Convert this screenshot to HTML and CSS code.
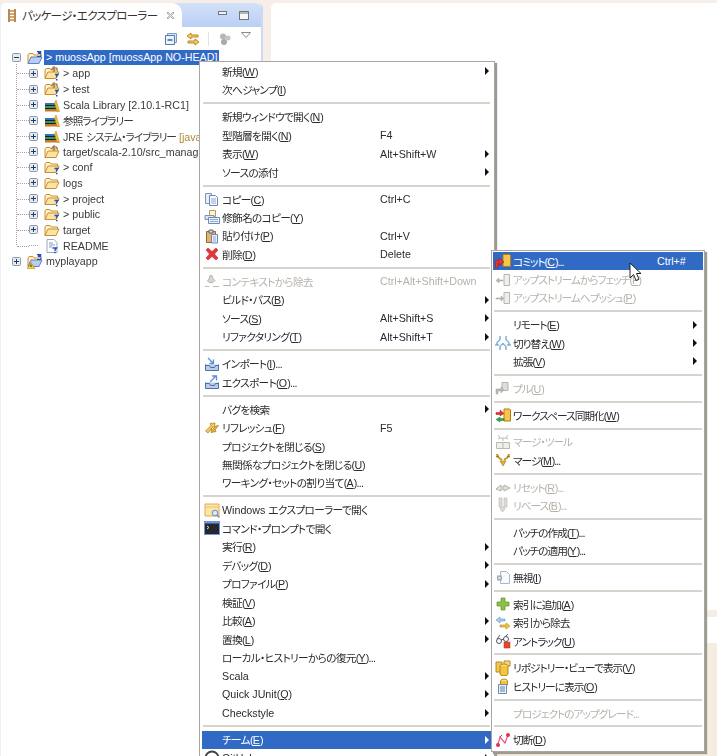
FILE: index.html
```html
<!DOCTYPE html>
<html lang="ja">
<head>
<meta charset="utf-8">
<title>パッケージ・エクスプローラー</title>
<link rel="stylesheet" href="styles.css">
</head>
<body>
<svg class="defs" width="0" height="0">
  <defs>
    <symbol id="plus" viewBox="0 0 9 9"><rect x=".5" y=".5" width="8" height="8" rx="1" fill="#e6e9ee" stroke="#8c97a6"/><path d="M2 4.500h5M4.500 2v5" stroke="#1c3a6e"/></symbol>
    <symbol id="minus" viewBox="0 0 9 9"><rect x=".5" y=".5" width="8" height="8" rx="1" fill="#e6e9ee" stroke="#8c97a6"/><path d="M2 4.500h5" stroke="#1c3a6e"/></symbol>
    <symbol id="folder" viewBox="0 0 16 16"><path d="M1 13.500V5l1-1.500h4L7 5h6.500v2" fill="#fff3c8" stroke="#c98f35"/><path d="M1 13.500 4 7h11l-3 6.500z" fill="#fbe3a0" stroke="#c98f35"/></symbol>
    <symbol id="pkgfolder" viewBox="0 0 16 16"><use href="#folder"/><path d="M10 1v6M8 3h5M8 3v2M13 3v2" stroke="#8a5a22" fill="none"/><path d="M11 9.500h3l-1.500 1.800v1.200" stroke="#2350b4" stroke-width="1.300" fill="none"/><path d="M12 14h1.500v1.500H12z" fill="#2350b4"/></symbol>
    <symbol id="qfolder" viewBox="0 0 16 16"><use href="#folder"/><path d="M10.500 9.500h3.500l-1.500 2v1" stroke="#2350b4" stroke-width="1.300" fill="none"/><path d="M12 13.700h1.500v1.500H12z" fill="#2350b4"/></symbol>
    <symbol id="srcfolder" viewBox="0 0 16 16"><use href="#folder"/><path d="M10 1v6M8 3h5M8 3v2M13 3v2" stroke="#8a5a22" fill="none"/></symbol>
    <symbol id="project" viewBox="0 0 16 16"><path d="M1 13.500V5l1-1.500h4L7 5h6.500v2" fill="#fff3c8" stroke="#c98f35"/><path d="M1 13.500 4 7h11l-3 6.500z" fill="#b9cdf0" stroke="#5f83c4"/><path d="M10 1.500h4v1h-3v1h3v3h-4" stroke="#2350b4" fill="none"/></symbol>
    <symbol id="warnproject" viewBox="0 0 16 16"><use href="#project"/><path d="M4 9.500 8 16H0z" fill="#fbd23a" stroke="#a97a12" stroke-width=".6"/><path d="M4 11.500v2.500" stroke="#222"/></symbol>
    <symbol id="lib" viewBox="0 0 16 16"><path d="M1 6h11v2.500H1z" fill="#3d6fb5"/><path d="M1 9h12v2.500H1z" fill="#3a9a4f"/><path d="M1 12h13v2.500H1z" fill="#c47a22"/><path d="M1 8.500h11M1 11.500h12" stroke="#123"/><path d="M12 3 15.500 14.500H13L10.500 6z" fill="#f2c230" stroke="#a37a12" stroke-width=".5"/></symbol>
    <symbol id="readme" viewBox="0 0 16 16"><path d="M3 1.500h7l3 3v10H3z" fill="#fff" stroke="#98a8c0"/><path d="M5 5h4M5 7h6M5 9h3" stroke="#7f9bc8"/><path d="M8.500 10h4l-1.500 2v1" stroke="#2350b4" stroke-width="1.300" fill="none"/><path d="M10.300 13.700h1.500v1.500h-1.500z" fill="#2350b4"/></symbol>
    <symbol id="copy" viewBox="0 0 16 16"><path d="M1.500 2.500h6v10h-6z" fill="#e6eefa" stroke="#7d94b8"/><path d="M5.500 4.500h6l2 2v8h-8z" fill="#f6f9ff" stroke="#6e88b0"/><path d="M7 8h5M7 10h5M7 12h5" stroke="#8ea8d4"/></symbol>
    <symbol id="qcopy" viewBox="0 0 16 16"><path d="M5.500 1.500h6v6h-6z" fill="#fff3d0" stroke="#b99a55"/><path d="M1 6.500h9v4H1z" fill="#d9e4f6" stroke="#7d94b8"/><path d="M4.500 8.500h11v6h-11z" fill="#eef3fb" stroke="#6e88b0"/><path d="M6 10.500h8M6 12.500h8" stroke="#8ea8d4"/></symbol>
    <symbol id="paste" viewBox="0 0 16 16"><path d="M2.500 3.500h9v11h-9z" fill="#e2b56a" stroke="#8f6a30"/><path d="M5 2h4v3H5z" fill="#cfd6e0" stroke="#5c6678"/><path d="M7.500 6.500h6v8.500h-6z" fill="#eaf0fa" stroke="#6e88b0"/><path d="M9 9h3M9 11h3M9 13h3" stroke="#8ea8d4"/></symbol>
    <symbol id="delete" viewBox="0 0 16 16"><path d="M2 4 4 2l4 3.500L12 2l2 2-3.500 4 3.500 4-2 2-4-3.500L4 14l-2-2 3.500-4z" fill="#e3363a" stroke="#c8272c" stroke-width=".6"/></symbol>
    <symbol id="ctxremove" viewBox="0 0 16 16"><path d="M6 2.500h2l1 3 2 2-2 2H5L3.500 8 5 6z" fill="#d8d5d0" stroke="#b9b5ae"/><path d="M1 13.500h4M9 13.500h6" stroke="#bdb9b2"/></symbol>
    <symbol id="import" viewBox="0 0 16 16"><path d="M1.500 8.500v6h13v-6" fill="#b9cdea" stroke="#4b6fa8"/><path d="M1.500 9.500h4l1 2h4l1-2h3" fill="none" stroke="#4b6fa8"/><path d="M4 2l5 5M9.500 3.500v4h-4" fill="none" stroke="#5a8fd8" stroke-width="1.300"/></symbol>
    <symbol id="export" viewBox="0 0 16 16"><path d="M1.500 8.500v6h13v-6" fill="#b9cdea" stroke="#4b6fa8"/><path d="M1.500 9.500h4l1 2h4l1-2h3" fill="none" stroke="#4b6fa8"/><path d="M6 8l6-6M8 2h4.500v4.500" fill="none" stroke="#5a8fd8" stroke-width="1.300"/></symbol>
    <symbol id="refresh" viewBox="0 0 16 16"><path d="M1.500 11 7 5.500 6 3.500l5-.5-.5 5-1.500-1.500L4 13z" fill="#f2c65a" stroke="#b07d1d" stroke-width=".7"/><path d="M14.500 5.500 11 10l1 1.500-5 1 .5-4 1 1L12 6z" fill="#edb33e" stroke="#a7721a" stroke-width=".7"/></symbol>
    <symbol id="explorer" viewBox="0 0 16 16"><path d="M1 2h14v12H1z" fill="#fbe6a8" stroke="#e4a94a"/><path d="M1 5h14" stroke="#eec372"/><circle cx="11" cy="11" r="2.800" fill="#d9e8fb" stroke="#6d8fc0"/><path d="M13 13l2.500 2.500" stroke="#6d8fc0" stroke-width="1.400"/></symbol>
    <symbol id="cmd" viewBox="0 0 16 16"><path d="M0 1h16v14H0z" fill="#6f97d8"/><path d="M1 3.500h14V14H1z" fill="#26262c"/><path d="M3 6l2 1.500L3 9" stroke="#ddd" fill="none"/></symbol>
    <symbol id="commit" viewBox="0 0 16 16"><path d="M8 1.500h6.500l1 1v11H8z" fill="#f6c64a" stroke="#b27c16"/><path d="M.5 15V7.500h3.500V5l5 4-5 3.500V10H3v5z" fill="#e5342f" stroke="#a91b1b" stroke-width=".6"/></symbol>
    <symbol id="fetch" viewBox="0 0 16 16"><path d="M9 2.500h5.500v11H9z" fill="#eee" stroke="#b8b4ae"/><path d="M8 8H4V6L1 8.500 4 11V9h4z" fill="#bcb8b2" stroke="#a5a19b" stroke-width=".5"/></symbol>
    <symbol id="push" viewBox="0 0 16 16"><path d="M9 2.500h5.500v11H9z" fill="#eee" stroke="#b8b4ae"/><path d="M1 8h5V6l3 2.500L6 11V9H1z" fill="#bcb8b2" stroke="#a5a19b" stroke-width=".5"/></symbol>
    <symbol id="switch" viewBox="0 0 16 16"><path d="M5 1v3c0 2-3 2-3 4v2M11 1v3c0 2 3 2 3 4v2M5 15v-3c0-2 3-2 3-4M11 15v-3c0-2-3-2-3-4" fill="none" stroke="#7fb0d8" stroke-width="1.500"/><path d="M0 10h4M12 10h4" stroke="#5b93c4"/></symbol>
    <symbol id="pull" viewBox="0 0 16 16"><path d="M7 2.500h6v8H7z" fill="#ddd" stroke="#b8b4ae"/><path d="M1 9h5v-2l3 3-3 3v-2H3v3H1z" fill="#bcb8b2" stroke="#a5a19b" stroke-width=".5"/></symbol>
    <symbol id="sync" viewBox="0 0 16 16"><path d="M9 2h5.500l1 1v11H9z" fill="#f6c64a" stroke="#b27c16"/><path d="M1 5.500h4V3l4 3.500L5 9V7.500H1z" fill="#e5342f" stroke="#a91b1b" stroke-width=".5"/><path d="M9 11.500H5V10L1 12.500 5 15v-1.500h4z" fill="#3aa84a" stroke="#1e7a2e" stroke-width=".5"/></symbol>
    <symbol id="mergetool" viewBox="0 0 16 16"><path d="M1.500 8.500h13v6h-13zM8 8.500v6" fill="#f0eeea" stroke="#bcb8b2"/><path d="M3 1l2 3M3 5l2-1h6l2 1M13 1l-2 3M8 4v3" fill="none" stroke="#c0bcb5"/></symbol>
    <symbol id="merge" viewBox="0 0 16 16"><path d="M2 2c0 3 2 4 5 6M14 2c0 3-2 4-5 6" fill="none" stroke="#c99a2e" stroke-width="2"/><path d="M5 9h6l-3 5z" fill="#e0b23c" stroke="#a37a12" stroke-width=".6"/><path d="M1 5l3-1M15 5l-3-1" stroke="#8a6a18"/></symbol>
    <symbol id="reset" viewBox="0 0 16 16"><path d="M1 10l5-4v2h3V6l6 3-6 3v-2H6v2z" fill="#e4e2de" stroke="#b5b1aa"/></symbol>
    <symbol id="revert" viewBox="0 0 16 16"><path d="M4 1h3v9h2V1h3v9H9l1 2-2.500 3L5 12l1-2H4z" fill="#dedbd6" stroke="#bab6af" stroke-width=".6"/></symbol>
    <symbol id="ignore" viewBox="0 0 16 16"><path d="M5.500 2.500h6l3 3v9h-9z" fill="#f8fafe" stroke="#a9b8d0"/><path d="M2 6.500h5v5H2z" fill="#9aa0aa"/><path d="M3 7.500l3 3M6 7.500l-3 3" stroke="#fff"/></symbol>
    <symbol id="add" viewBox="0 0 16 16"><path d="M6 2h4v4h4v4h-4v4H6v-4H2V6h4z" fill="#8cc04a" stroke="#5d8f2a" stroke-width=".7"/></symbol>
    <symbol id="remove" viewBox="0 0 16 16"><path d="M1 5l4-3v2h5v2H5v2z" fill="#a8cdee" stroke="#6a95bf" stroke-width=".6"/><path d="M15 11l-4-3v2H5v2h6v2z" fill="#f0c040" stroke="#b38a1e" stroke-width=".6"/></symbol>
    <symbol id="untrack" viewBox="0 0 16 16"><circle cx="4" cy="8" r="2.500" fill="none" stroke="#556"/><circle cx="11" cy="6" r="2.500" fill="none" stroke="#556"/><path d="M6 7l3-1M2 6l3-4M10 4l3-3" stroke="#556"/><path d="M9 9h6v6H9z" fill="#e8452c" stroke="#b52d18" stroke-width=".5"/></symbol>
    <symbol id="repo" viewBox="0 0 16 16"><path d="M1 2h6v10H1z" fill="#f2c850" stroke="#b58a1c"/><path d="M9 1h6v5H9z" fill="#f6d778" stroke="#b58a1c"/><ellipse cx="9" cy="6" rx="4" ry="2" fill="#f9e08a" stroke="#b58a1c"/><path d="M5 6v8a4 1.800 0 0 0 8 0V6" fill="#f2c440" stroke="#b58a1c"/></symbol>
    <symbol id="history" viewBox="0 0 16 16"><ellipse cx="9" cy="3" rx="3.500" ry="2" fill="#f9e08a" stroke="#b58a1c"/><path d="M5.500 3v4h7V3" fill="#f2c440" stroke="#b58a1c"/><path d="M3.500 6.500h8v9h-8z" fill="#eef3fb" stroke="#6e88b0"/><path d="M5 9h5M5 11h5M5 13h5" stroke="#5d7eb0"/></symbol>
    <symbol id="disconnect" viewBox="0 0 16 16"><path d="M3 12 5 5l5 6 3-8" fill="none" stroke="#e8577f" stroke-width="1.200"/><circle cx="3" cy="13" r="2" fill="#e0324a"/><circle cx="13" cy="3" r="2" fill="#e0324a"/><path d="M7 3l-2 2" stroke="#c33"/></symbol>
    <symbol id="github" viewBox="0 0 16 16"><circle cx="8" cy="8" r="6.500" fill="#fff" stroke="#444" stroke-width="2"/></symbol>
  </defs>
</svg>

<div class="app">
  <section class="pane">
    <header class="tabbar">
      <div class="tab">
        <svg class="tabicon" width="8" height="13" viewBox="0 0 8 13"><path d="M1 0v13M7 0v13" stroke="#8a5a22" stroke-width="1.400"/><path d="M1 2h6M1 5h6M1 8h6M1 11h6" stroke="#c48a3c" stroke-width="1.400"/></svg>
        <span class="tabtitle">パッケージ・エクスプローラー</span>
        <svg class="tabclose" width="9" height="9" viewBox="0 0 9 9"><path d="M1 2 2 1l2.500 2.500L7 1l1 1-2.500 2.500L8 7 7 8 4.500 5.500 2 8 1 7l2.500-2.500z" fill="#e8e8e8" stroke="#8f8f8f" stroke-width=".7"/></svg>
      </div>
      <div class="winbtns">
        <svg width="9" height="4" viewBox="0 0 9 4"><rect x=".5" y=".5" width="8" height="3" fill="#f3f3f3" stroke="#6f7680"/></svg>
        <svg width="10" height="9" viewBox="0 0 10 9"><rect x=".5" y=".5" width="9" height="8" fill="#f6f7f8" stroke="#6f7680"/><path d="M1 2h8" stroke="#6f7680"/></svg>
      </div>
    </header>
    <div class="toolbar">
      <svg class="tool-a" width="12" height="12" viewBox="0 0 12 12"><path d="M2.500.5h9v9h-9z" fill="#d8e4f6" stroke="#7a9cc8"/><path d="M.5 2.500h9v9h-9z" fill="#eef4fc" stroke="#4d79b4"/><path d="M2.500 7h5" stroke="#2c5590" stroke-width="1.400"/></svg>
      <svg class="tool-b" width="14" height="14" viewBox="0 0 14 14"><path d="M5 1 1 4l4 3V5h7V3H5z" fill="#f6d36a" stroke="#c1851c"/><path d="M9 7l4 3-4 3v-2H2V9h7z" fill="#f6d36a" stroke="#c1851c"/></svg>
      <i class="tool-sep"></i>
      <svg class="tool-c" width="12" height="12" viewBox="0 0 12 12"><circle cx="4" cy="3.500" r="3" fill="#b6b6b6"/><circle cx="9" cy="5" r="2.500" fill="#c4c4c4"/><circle cx="5" cy="9" r="3" fill="#a9a9a9"/></svg>
      <svg class="tool-d" width="10" height="6" viewBox="0 0 10 6"><path d="M.5.500h9L5 5.500z" fill="#fff" stroke="#8b8b8b"/></svg>
    </div>
    <div class="tree">
      <div class="row top">
        <svg class="exp" width="9" height="9"><use href="#minus"/></svg>
        <svg class="ico" width="16" height="16"><use href="#project"/></svg>
        <span class="lbl selected"><span class="chev">&gt;</span>muossApp [muossApp NO-HEAD]</span>
      </div>
      <div class="kids">
        <div class="row kid"><svg class="exp" width="9" height="9"><use href="#plus"/></svg><svg class="ico" width="16" height="16"><use href="#pkgfolder"/></svg><span class="lbl"><span class="chev">&gt;</span>app</span></div>
        <div class="row kid"><svg class="exp" width="9" height="9"><use href="#plus"/></svg><svg class="ico" width="16" height="16"><use href="#pkgfolder"/></svg><span class="lbl"><span class="chev">&gt;</span>test</span></div>
        <div class="row kid"><svg class="exp" width="9" height="9"><use href="#plus"/></svg><svg class="ico" width="16" height="16"><use href="#lib"/></svg><span class="lbl">Scala Library [2.10.1-RC1]</span></div>
        <div class="row kid"><svg class="exp" width="9" height="9"><use href="#plus"/></svg><svg class="ico" width="16" height="16"><use href="#lib"/></svg><span class="lbl ja">参照ライブラリー</span></div>
        <div class="row kid"><svg class="exp" width="9" height="9"><use href="#plus"/></svg><svg class="ico" width="16" height="16"><use href="#lib"/></svg><span class="lbl">JRE <span class="ja">システム・ライブラリー</span> <span class="deco">[javaSE-1.7]</span></span></div>
        <div class="row kid"><svg class="exp" width="9" height="9"><use href="#plus"/></svg><svg class="ico" width="16" height="16"><use href="#srcfolder"/></svg><span class="lbl">target/scala-2.10/src_managed</span></div>
        <div class="row kid"><svg class="exp" width="9" height="9"><use href="#plus"/></svg><svg class="ico" width="16" height="16"><use href="#qfolder"/></svg><span class="lbl"><span class="chev">&gt;</span>conf</span></div>
        <div class="row kid"><svg class="exp" width="9" height="9"><use href="#plus"/></svg><svg class="ico" width="16" height="16"><use href="#folder"/></svg><span class="lbl">logs</span></div>
        <div class="row kid"><svg class="exp" width="9" height="9"><use href="#plus"/></svg><svg class="ico" width="16" height="16"><use href="#qfolder"/></svg><span class="lbl"><span class="chev">&gt;</span>project</span></div>
        <div class="row kid"><svg class="exp" width="9" height="9"><use href="#plus"/></svg><svg class="ico" width="16" height="16"><use href="#qfolder"/></svg><span class="lbl"><span class="chev">&gt;</span>public</span></div>
        <div class="row kid"><svg class="exp" width="9" height="9"><use href="#plus"/></svg><svg class="ico" width="16" height="16"><use href="#folder"/></svg><span class="lbl">target</span></div>
        <div class="row kid leaf"><span class="exp"></span><svg class="ico" width="16" height="16"><use href="#readme"/></svg><span class="lbl">README</span></div>
      </div>
      <div class="row top">
        <svg class="exp" width="9" height="9"><use href="#plus"/></svg>
        <svg class="ico" width="16" height="16"><use href="#warnproject"/></svg>
        <span class="lbl">myplayapp</span>
      </div>
    </div>
  </section>
  <div class="gutter"></div>
  <main class="editor">
    <div class="ed-main"></div>
    <div class="ed-band"></div>
    <div class="ed-white"></div>
    <div class="ed-bottom"></div>
  </main>
</div>

<nav class="menu main-menu">
  <div class="mi"><span class="mic"></span><span class="t">新規(<u>W</u>)</span><span></span><b class="arr"></b></div>
  <div class="mi"><span class="mic"></span><span class="t">次へジャンプ(<u>I</u>)</span><span></span><span></span></div>
  <hr class="sep">
  <div class="mi"><span class="mic"></span><span class="t">新規ウィンドウで開く(<u>N</u>)</span><span></span><span></span></div>
  <div class="mi"><span class="mic"></span><span class="t">型階層を開く(<u>N</u>)</span><span>F4</span><span></span></div>
  <div class="mi"><span class="mic"></span><span class="t">表示(<u>W</u>)</span><span>Alt+Shift+W</span><b class="arr"></b></div>
  <div class="mi"><span class="mic"></span><span class="t">ソースの添付</span><span></span><b class="arr"></b></div>
  <hr class="sep">
  <div class="mi"><svg class="mic" width="16" height="16"><use href="#copy"/></svg><span class="t">コピー(<u>C</u>)</span><span>Ctrl+C</span><span></span></div>
  <div class="mi"><svg class="mic" width="16" height="16"><use href="#qcopy"/></svg><span class="t">修飾名のコピー(<u>Y</u>)</span><span></span><span></span></div>
  <div class="mi"><svg class="mic" width="16" height="16"><use href="#paste"/></svg><span class="t">貼り付け(<u>P</u>)</span><span>Ctrl+V</span><span></span></div>
  <div class="mi"><svg class="mic" width="16" height="16"><use href="#delete"/></svg><span class="t">削除(<u>D</u>)</span><span>Delete</span><span></span></div>
  <hr class="sep">
  <div class="mi off"><svg class="mic" width="16" height="16"><use href="#ctxremove"/></svg><span class="t">コンテキストから除去</span><span>Ctrl+Alt+Shift+Down</span><span></span></div>
  <div class="mi"><span class="mic"></span><span class="t">ビルド・パス(<u>B</u>)</span><span></span><b class="arr"></b></div>
  <div class="mi"><span class="mic"></span><span class="t">ソース(<u>S</u>)</span><span>Alt+Shift+S</span><b class="arr"></b></div>
  <div class="mi"><span class="mic"></span><span class="t">リファクタリング(<u>T</u>)</span><span>Alt+Shift+T</span><b class="arr"></b></div>
  <hr class="sep">
  <div class="mi"><svg class="mic" width="16" height="16"><use href="#import"/></svg><span class="t">インポート(<u>I</u>)...</span><span></span><span></span></div>
  <div class="mi"><svg class="mic" width="16" height="16"><use href="#export"/></svg><span class="t">エクスポート(<u>O</u>)...</span><span></span><span></span></div>
  <hr class="sep">
  <div class="mi"><span class="mic"></span><span class="t">バグを検索</span><span></span><b class="arr"></b></div>
  <div class="mi"><svg class="mic" width="16" height="16"><use href="#refresh"/></svg><span class="t">リフレッシュ(<u>F</u>)</span><span>F5</span><span></span></div>
  <div class="mi"><span class="mic"></span><span class="t">プロジェクトを閉じる(<u>S</u>)</span><span></span><span></span></div>
  <div class="mi"><span class="mic"></span><span class="t">無関係なプロジェクトを閉じる(<u>U</u>)</span><span></span><span></span></div>
  <div class="mi"><span class="mic"></span><span class="t">ワーキング・セットの割り当て(<u>A</u>)...</span><span></span><span></span></div>
  <hr class="sep">
  <div class="mi"><svg class="mic" width="16" height="16"><use href="#explorer"/></svg><span class="t"><span class="lat">Windows </span>エクスプローラーで開く</span><span></span><span></span></div>
  <div class="mi"><svg class="mic" width="16" height="16"><use href="#cmd"/></svg><span class="t">コマンド・プロンプトで開く</span><span></span><span></span></div>
  <div class="mi"><span class="mic"></span><span class="t">実行(<u>R</u>)</span><span></span><b class="arr"></b></div>
  <div class="mi"><span class="mic"></span><span class="t">デバッグ(<u>D</u>)</span><span></span><b class="arr"></b></div>
  <div class="mi"><span class="mic"></span><span class="t">プロファイル(<u>P</u>)</span><span></span><b class="arr"></b></div>
  <div class="mi"><span class="mic"></span><span class="t">検証(<u>V</u>)</span><span></span><span></span></div>
  <div class="mi"><span class="mic"></span><span class="t">比較(<u>A</u>)</span><span></span><b class="arr"></b></div>
  <div class="mi"><span class="mic"></span><span class="t">置換(<u>L</u>)</span><span></span><b class="arr"></b></div>
  <div class="mi"><span class="mic"></span><span class="t">ローカル・ヒストリーからの復元(<u>Y</u>)...</span><span></span><span></span></div>
  <div class="mi"><span class="mic"></span><span>Scala</span><span></span><b class="arr"></b></div>
  <div class="mi"><span class="mic"></span><span>Quick JUnit(<u>Q</u>)</span><span></span><b class="arr"></b></div>
  <div class="mi"><span class="mic"></span><span>Checkstyle</span><span></span><b class="arr"></b></div>
  <hr class="sep">
  <div class="mi on"><span class="mic"></span><span class="t">チーム(<u>E</u>)</span><span></span><b class="arr"></b></div>
  <div class="mi"><svg class="mic" width="16" height="16"><use href="#github"/></svg><span>GitHub</span><span></span><b class="arr"></b></div>
</nav>

<nav class="menu sub-menu">
  <div class="mi on"><svg class="mic" width="16" height="16"><use href="#commit"/></svg><span class="t">コミット(<u>C</u>)...</span><span>Ctrl+#</span><span></span></div>
  <div class="mi off"><svg class="mic" width="16" height="16"><use href="#fetch"/></svg><span class="t">アップストリームからフェッチ(<u>F</u>)</span><span></span><span></span></div>
  <div class="mi off"><svg class="mic" width="16" height="16"><use href="#push"/></svg><span class="t">アップストリームへプッシュ(<u>P</u>)</span><span></span><span></span></div>
  <hr class="sep">
  <div class="mi"><span class="mic"></span><span class="t">リモート(<u>E</u>)</span><span></span><b class="arr"></b></div>
  <div class="mi"><svg class="mic" width="16" height="16"><use href="#switch"/></svg><span class="t">切り替え(<u>W</u>)</span><span></span><b class="arr"></b></div>
  <div class="mi"><span class="mic"></span><span class="t">拡張(<u>V</u>)</span><span></span><b class="arr"></b></div>
  <hr class="sep">
  <div class="mi off"><svg class="mic" width="16" height="16"><use href="#pull"/></svg><span class="t">プル(<u>U</u>)</span><span></span><span></span></div>
  <hr class="sep">
  <div class="mi"><svg class="mic" width="16" height="16"><use href="#sync"/></svg><span class="t">ワークスペース同期化(<u>W</u>)</span><span></span><span></span></div>
  <hr class="sep">
  <div class="mi off"><svg class="mic" width="16" height="16"><use href="#mergetool"/></svg><span class="t">マージ・ツール</span><span></span><span></span></div>
  <div class="mi"><svg class="mic" width="16" height="16"><use href="#merge"/></svg><span class="t">マージ(<u>M</u>)...</span><span></span><span></span></div>
  <hr class="sep">
  <div class="mi off"><svg class="mic" width="16" height="16"><use href="#reset"/></svg><span class="t">リセット(<u>R</u>)...</span><span></span><span></span></div>
  <div class="mi off"><svg class="mic" width="16" height="16"><use href="#revert"/></svg><span class="t">リベース(<u>B</u>)...</span><span></span><span></span></div>
  <hr class="sep">
  <div class="mi"><span class="mic"></span><span class="t">パッチの作成(<u>T</u>)...</span><span></span><span></span></div>
  <div class="mi"><span class="mic"></span><span class="t">パッチの適用(<u>Y</u>)...</span><span></span><span></span></div>
  <hr class="sep">
  <div class="mi"><svg class="mic" width="16" height="16"><use href="#ignore"/></svg><span class="t">無視(<u>I</u>)</span><span></span><span></span></div>
  <hr class="sep">
  <div class="mi"><svg class="mic" width="16" height="16"><use href="#add"/></svg><span class="t">索引に追加(<u>A</u>)</span><span></span><span></span></div>
  <div class="mi"><svg class="mic" width="16" height="16"><use href="#remove"/></svg><span class="t">索引から除去</span><span></span><span></span></div>
  <div class="mi"><svg class="mic" width="16" height="16"><use href="#untrack"/></svg><span class="t">アントラック(<u>U</u>)</span><span></span><span></span></div>
  <hr class="sep">
  <div class="mi"><svg class="mic" width="16" height="16"><use href="#repo"/></svg><span class="t">リポジトリー・ビューで表示(<u>V</u>)</span><span></span><span></span></div>
  <div class="mi"><svg class="mic" width="16" height="16"><use href="#history"/></svg><span class="t">ヒストリーに表示(<u>O</u>)</span><span></span><span></span></div>
  <hr class="sep">
  <div class="mi off"><span class="mic"></span><span class="t">プロジェクトのアップグレード...</span><span></span><span></span></div>
  <hr class="sep">
  <div class="mi"><svg class="mic" width="16" height="16"><use href="#disconnect"/></svg><span class="t">切断(<u>D</u>)</span><span></span><span></span></div>
</nav>

<svg class="cursor" width="13" height="21" viewBox="0 0 13 21"><path d="M1 1v15l3.500-3.500 2.500 6 3-1.300-2.500-5.700H12z" fill="#fff" stroke="#222"/></svg>
</body>
</html>
```

FILE: styles.css
```css
* { box-sizing: border-box; }
html, body { margin: 0; padding: 0; }
body {
  position: relative;
  width: 717px;
  height: 756px;
  overflow: hidden;
  background: #f6efe9;
  font-family: "Liberation Sans", "Noto Sans CJK JP", sans-serif;
  font-size: 10.7px;
  font-feature-settings: "palt" 1;
  color: #2b2b2b;
}
.defs { position: absolute; }

.app, .menu, .cursor { filter: blur(.3px); }
.app { display: flex; height: 756px; padding-top: 3px; }

/* left view */
.pane {
  width: 263px;
  flex: none;
  display: flex;
  flex-direction: column;
  background: #fff;
  border-left: 1px solid #eef1fb;
  border-right: 2px solid #cdd9f0;
  border-radius: 6px 6px 0 0;
}
.tabbar {
  height: 24px;
  display: flex;
  justify-content: space-between;
  background: linear-gradient(#d3e1f8, #b9cff5);
  border-radius: 6px 6px 0 0;
}
.tab {
  width: 181px;
  display: flex;
  align-items: center;
  padding-left: 7px;
  background: #fff;
  border-radius: 5px 10px 0 0;
}
.tabicon { flex: none; }
.tabtitle { margin-left: 6px; font-size: 11.5px; letter-spacing: -.65px; white-space: nowrap; color: #333; }
.tabclose { flex: none; margin-left: auto; margin-right: 7px; }
.winbtns { display: flex; align-items: center; gap: 12px; padding-right: 12px; }
.winbtns svg:first-child { margin-top: -5px; }

.toolbar {
  height: 23px;
  display: flex;
  align-items: center;
  padding-left: 164px;
}
.tool-b { margin-left: 9px; }
.tool-sep { width: 1px; height: 14px; background: #e3e3e3; margin-left: 8px; }
.tool-c { margin-left: 10px; }
.tool-d { margin-left: 10px; margin-top: -7px; }

/* tree */
.tree { display: flex; flex-direction: column; }
.kids { position: relative; display: flex; flex-direction: column; }
.kids::before {
  content: "";
  position: absolute;
  left: 15px;
  top: -2px;
  bottom: 8px;
  border-left: 1px dotted #a5a5a5;
}
.row {
  position: relative;
  height: 15.65px;
  display: flex;
  align-items: center;
  white-space: nowrap;
  color: #3a3a3a;
}
.top { padding-left: 11px; }
.kid { padding-left: 28px; }
.kid::before {
  content: "";
  position: absolute;
  left: 16px;
  width: 12px;
  top: 50%;
  border-top: 1px dotted #a5a5a5;
}
.exp { width: 9px; flex: none; }
.ico { margin-left: 6px; flex: none; }
.leaf .exp { border-top: 1px dotted #a5a5a5; }
.lbl { margin-left: 3px; }
.ja { letter-spacing: -1px; }
.selected {
  margin-left: 1px;
  padding: 0 2px;
  height: 15px;
  line-height: 15px;
  background: #316ac5;
  color: #fff;
}
.chev { margin-right: 3px; }
.deco { color: #b08a3a; }

/* editor */
.gutter { width: 8px; flex: none; }
.editor { flex: 1; display: flex; flex-direction: column; }
.ed-main { height: 607px; background: #fff; border-radius: 5px 0 0 0; }
.ed-band { height: 7px; background: #f4eee6; }
.ed-white { height: 26px; background: #fff; }
.ed-bottom { flex: 1; background: #f5eee0; }

/* menus */
.menu {
  position: absolute;
  background: #fff;
  border: 1px solid #aaa59d;
  box-shadow: 2px 2px 1px #9d9a94;
}
.main-menu {
  --rh: 18.45px;
  --ls: -.7px;
  left: 199px;
  top: 61px;
  width: 296px;
  height: 720px;
  padding: 0 3px 0 2px;
}
.sub-menu {
  --rh: 18.35px;
  --ls: -1px;
  left: 491px;
  top: 250px;
  width: 214px;
  padding: 1px 1px 2px;
}
.mi {
  height: var(--rh);
  display: grid;
  grid-template-columns: 18px 158px 1fr 6px;
  align-items: center;
  padding-left: 2px;
  white-space: nowrap;
  color: #2b2b2b;
}
.sub-menu .mi { grid-template-columns: 18px 144px 1fr 10px; }
.mic { display: block; }
.t { letter-spacing: var(--ls); }
.lat, .mi u { letter-spacing: 0; }
.mi u { text-underline-offset: 1px; }
.mi.off { color: #b7b2aa; }
.mi.on { background: #316ac5; color: #fff; }
.arr {
  width: 0;
  height: 0;
  border-left: 4px solid #111;
  border-top: 4px solid transparent;
  border-bottom: 4px solid transparent;
}
.mi.on .arr { border-left-color: #fff; }
.sep {
  height: 2px;
  margin: 3.3px 1px;
  border: 0;
  background: #d8d3cd;
}
.sub-menu .sep { margin: 3.25px 1px; }
.cursor { position: absolute; left: 629px; top: 262px; }
```
